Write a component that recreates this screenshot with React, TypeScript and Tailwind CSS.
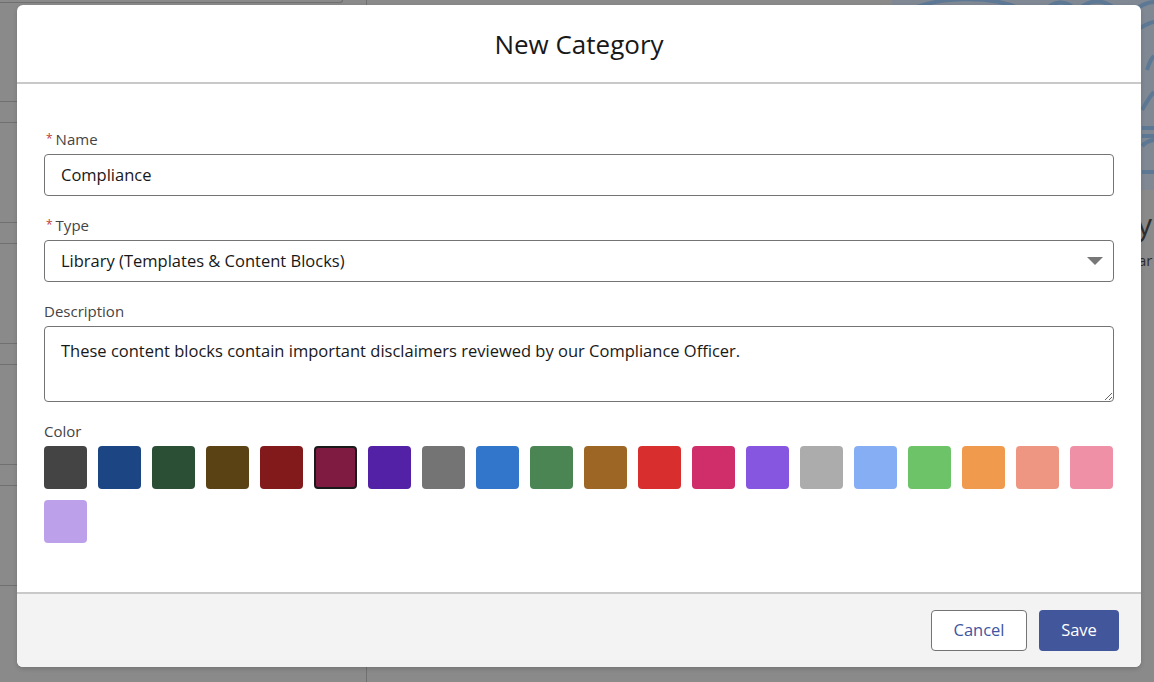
const swatches = [
  "#444444",
  "#1b4583",
  "#2a4f35",
  "#5a4214",
  "#82191a",
  "#7f1a40",
  "#5321a6",
  "#747474",
  "#3276cc",
  "#4a8553",
  "#9d6624",
  "#d92e2e",
  "#d02e6a",
  "#8756e0",
  "#acacac",
  "#86aef5",
  "#6cc368",
  "#f09a4e",
  "#ef9682",
  "#ef90a7",
  "#bca0ea",
];

const SELECTED = 5;

const Label = ({ text, required }: { text: string; required?: boolean }) => (
  <div className="flex items-center h-5 mb-[5px] text-[15px] leading-5 text-[#444444]">
    {required && <span className="text-[#c23934] text-[12px] mr-[3px] ml-[2px]">*</span>}
    {text}
  </div>
);

const BackgroundRows = () => (
  <div className="flex flex-col w-[343px]">
    <div className="h-[3px] border-b border-r border-[#6f6f6f] rounded-br-[6px]" />
    <div className="h-[98px]" />
    {[0, 1, 2, 3].map((i) => (
      <div key={i} className="flex flex-col">
        <div className="h-[22px] border-t border-b border-[#707070]" />
        <div className="h-[99px]" />
      </div>
    ))}
    <div className="border-t border-[#707070]" />
  </div>
);

export default function App() {
  return (
    <div
      className="relative w-full h-[682px] overflow-hidden bg-[#8a8a8a]"
      style={{ fontFamily: '"Open Sans", "Noto Sans", sans-serif' }}
    >
      {/* page behind the overlay */}
      <div className="flex h-full">
        <BackgroundRows />
        <div className="w-[23px]" />
        <div className="border-l border-[#707070] h-full" />
        <div className="flex-1" />
        <div className="w-[15px] flex flex-col pt-[206px] text-[#2e2e2e] whitespace-nowrap">
          <div className="text-[30px] leading-[36px] -ml-[2px]">y</div>
          <div className="text-[15px] leading-5 mt-[8px] -ml-[1px]">ar</div>
        </div>
      </div>

      {/* faint illustration top right */}
      <svg
        className="absolute right-0 top-0"
        width="262"
        height="190"
        viewBox="0 0 262 190"
        fill="none"
      >
        <rect x="0" y="0" width="262" height="190" fill="#7f8893" />
        <g stroke="#5d7895" strokeWidth="4">
          <path d="M10 14 C40 -4 100 -6 130 10" />
          <path d="M150 14 C160 0 175 -2 185 12" />
          <path d="M185 12 C195 -2 215 -2 225 12" />
          <path d="M240 12 C250 4 258 2 262 2" />
          <path d="M248 28 C255 24 260 22 262 22" />
          <path d="M255 70 C258 60 262 56 262 56" />
          <path d="M250 110 C258 96 262 92 262 92" />
          <path d="M250 128 L262 128" />
          <path d="M250 136 L262 136" />
          <path d="M250 146 C256 140 262 140 262 140" />
          <path d="M250 172 L262 172" />
        </g>
      </svg>

      {/* modal */}
      <div className="absolute left-[17px] top-[5px] w-[1124px] h-[662px] bg-white rounded-[6px] overflow-hidden flex flex-col shadow-[0_2px_4px_rgba(0,0,0,0.15)]">
        <div className="h-[77px] flex items-center justify-center border-b-2 border-[#c9c9c9] box-content">
          <h2 className="text-[26px] leading-[32px] text-[#181818]">New Category</h2>
        </div>

        <div className="flex-1 px-[27px] pt-[45px]">
          <Label text="Name" required />
          <div className="h-[42px] border border-[#747474] rounded-[4px] flex items-center px-4 text-[16.5px] text-[#181818]">
            Compliance
          </div>

          <div className="mt-[19px]">
            <Label text="Type" required />
            <div className="h-[42px] border border-[#747474] rounded-[4px] flex items-center justify-between pl-4 pr-[10px] text-[16.5px] text-[#181818]">
              <span>Library (Templates &amp; Content Blocks)</span>
              <svg width="16" height="8" viewBox="0 0 16 8">
                <path d="M0 0 L16 0 L8 8 Z" fill="#777777" />
              </svg>
            </div>
          </div>

          <div className="mt-[19px]">
            <Label text="Description" />
            <textarea
              readOnly
              className="block w-full h-[76px] border border-[#747474] rounded-[4px] px-4 pt-[12px] text-[16.5px] leading-6 text-[#181818] outline-none"
              defaultValue="These content blocks contain important disclaimers reviewed by our Compliance Officer."
            />
          </div>

          <div className="mt-[19px]">
            <Label text="Color" />
            <div className="flex flex-wrap gap-[11px]">
              {swatches.map((c, i) => (
                <div
                  key={c}
                  className={
                    i === SELECTED
                      ? "w-[43px] h-[43px] rounded-[4px] border-2 border-[#1a1a1a]"
                      : "w-[43px] h-[43px] rounded-[4px]"
                  }
                  style={{ backgroundColor: c }}
                />
              ))}
            </div>
          </div>
        </div>

        <div className="h-[75px] bg-[#f3f3f3] border-t-2 border-[#c9c9c9] flex items-center justify-end gap-3 pr-[22px]">
          <button className="w-[96px] h-[41px] bg-white border border-[#747474] rounded-[4px] text-[16.5px] text-[#3e569f]">
            Cancel
          </button>
          <button className="w-[80px] h-[41px] bg-[#42569b] rounded-[4px] text-[16.5px] text-white">
            Save
          </button>
        </div>
      </div>
    </div>
  );
}
